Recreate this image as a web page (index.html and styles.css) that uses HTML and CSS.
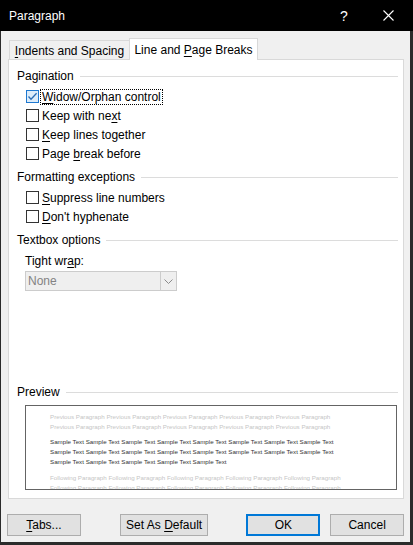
FILE: index.html
```html
<!DOCTYPE html>
<html>
<head>
<meta charset="utf-8">
<title>Paragraph</title>
<link rel="stylesheet" href="styles.css">
</head>
<body>
<div class="dialog">
  <div class="titlebar">
    <span class="title">Paragraph</span>
    <span class="help">?</span>
    <svg class="close" width="11" height="11" viewBox="0 0 11 11"><path d="M0.5 0.5L10.5 10.5M10.5 0.5L0.5 10.5" stroke="#fff" stroke-width="1.1" fill="none"/></svg>
  </div>
  <div class="client">
    <div class="tabs">
      <div class="tab"><span><u>I</u>ndents and Spacing</span></div>
      <div class="tab active"><span>Line and <u>P</u>age Breaks</span></div>
    </div>
    <div class="panel">
      <div class="group-title"><span>Pagination</span></div>
      <div class="checks">
        <div class="check"><span class="box checked"><svg width="11" height="11" viewBox="0 0 11 11"><path d="M1.5 5.5L4 8.2L9.6 2.2" stroke="#2a6db5" stroke-width="1.3" fill="none"/></svg></span><span class="label focus"><u>W</u>idow/Orphan control</span></div>
        <div class="check"><span class="box"></span><span class="label">Keep with ne<u>x</u>t</span></div>
        <div class="check"><span class="box"></span><span class="label"><u>K</u>eep lines together</span></div>
        <div class="check"><span class="box"></span><span class="label">Page <u>b</u>reak before</span></div>
      </div>
      <div class="group-title sec"><span>Formatting exceptions</span></div>
      <div class="checks">
        <div class="check"><span class="box"></span><span class="label"><u>S</u>uppress line numbers</span></div>
        <div class="check"><span class="box"></span><span class="label"><u>D</u>on't hyphenate</span></div>
      </div>
      <div class="group-title sec"><span>Textbox options</span></div>
      <div class="field-label">Tight wr<u>a</u>p:</div>
      <div class="select">
        <span class="select-value">None</span>
        <span class="select-btn"><svg width="9" height="5" viewBox="0 0 9 5"><path d="M0.5 0.5L4.5 4.5L8.5 0.5" stroke="#8a8a8a" stroke-width="1" fill="none"/></svg></span>
      </div>
      <div class="group-title preview-title"><span>Preview</span></div>
      <div class="preview">
        <div class="pv-block pv-prev">
          <div class="pv-line">Previous Paragraph Previous Paragraph Previous Paragraph Previous Paragraph Previous Paragraph</div>
          <div class="pv-line">Previous Paragraph Previous Paragraph Previous Paragraph Previous Paragraph Previous Paragraph</div>
        </div>
        <div class="pv-block pv-sample">
          <div class="pv-line">Sample Text Sample Text Sample Text Sample Text Sample Text Sample Text Sample Text Sample Text</div>
          <div class="pv-line">Sample Text Sample Text Sample Text Sample Text Sample Text Sample Text Sample Text Sample Text</div>
          <div class="pv-line">Sample Text Sample Text Sample Text Sample Text Sample Text</div>
        </div>
        <div class="pv-block pv-prev">
          <div class="pv-line">Following Paragraph Following Paragraph Following Paragraph Following Paragraph Following Paragraph</div>
          <div class="pv-line">Following Paragraph Following Paragraph Following Paragraph Following Paragraph Following Paragraph</div>
        </div>
      </div>
    </div>
    <div class="buttons">
      <div class="btn"><span><u>T</u>abs...</span></div>
      <div class="btn set-default"><span>Set As <u>D</u>efault</span></div>
      <div class="btn ok"><span>OK</span></div>
      <div class="btn cancel"><span>Cancel</span></div>
    </div>
  </div>
</div>
</body>
</html>
```

FILE: styles.css
```css
* { box-sizing: border-box; }
html, body { margin: 0; padding: 0; }
body {
  width: 413px;
  height: 545px;
  background: #2b2b2b;
  font-family: "Liberation Sans", Arial, sans-serif;
  font-size: 12px;
  color: #000;
  overflow: hidden;
}
u { text-decoration-thickness: 1px; text-underline-offset: 2px; }

.dialog { display: flex; flex-direction: column; height: 545px; }

.titlebar {
  flex: none;
  height: 31px;
  background: #000;
  color: #fff;
  display: flex;
  align-items: center;
}
.title { margin-left: 9px; font-size: 12px; }
.help { margin-left: auto; margin-right: 37px; font-size: 14px; width: 6px; text-align: center; }
.close { margin-right: 19px; }

.client {
  flex: 1;
  margin: 0 3px 3px 1px;
  background: #f0f0f0;
  padding: 7px 6px 0 7px;
  display: flex;
  flex-direction: column;
}

.tabs { display: flex; align-items: flex-end; height: 21px; padding-left: 1px; }
.tab {
  height: 19px;
  width: 120px;
  border: 1px solid #d9d9d9;
  border-bottom: none;
  border-right: none;
  background: #f0f0f0;
  display: flex;
  align-items: center;
  justify-content: center;
  padding-top: 2px;
}
.tab.active {
  height: 22px;
  width: 129px;
  border-right: 1px solid #d9d9d9;
  background: #fff;
  margin-bottom: -1px;
  position: relative;
  z-index: 1;
  padding-top: 0;
}

.panel {
  flex: none;
  height: 440px;
  background: #fff;
  border: 1px solid #d9d9d9;
  padding: 0 5px 0 0;
  display: flex;
  flex-direction: column;
}

.group-title {
  display: flex;
  align-items: center;
  height: 16px;
  padding-left: 8px;
  margin-top: 8px;
}
.group-title::after {
  content: "";
  flex: 1;
  height: 1px;
  background: #dcdcdc;
  margin-left: 6px;
}
.group-title.sec { margin-top: 6px; }
.group-title.preview-title { margin-top: 93px; }

.checks { margin-top: 3px; display: flex; flex-direction: column; }
.check { display: flex; align-items: center; height: 19px; padding-left: 17px; }
.box {
  width: 13px;
  height: 13px;
  border: 1px solid #333;
  background: #fff;
  flex: none;
  display: flex;
}
.box.checked { border-color: #1e78d0; background: #dcecfa; }
.label {
  margin-left: 1px;
  border: 1px solid transparent;
  padding: 0 1px;
  line-height: 14px;
}
.label.focus { border: 1px dotted #000; }

.field-label { padding-left: 16px; margin-top: 5px; height: 16px; line-height: 16px; }

.select {
  margin-top: 2px;
  margin-left: 16px;
  width: 152px;
  height: 20px;
  border: 1px solid #cccccc;
  background: #efefef;
  display: flex;
  align-items: stretch;
}
.select-value { flex: 1; padding-left: 2px; color: #838383; line-height: 18px; }
.select-btn {
  width: 16px;
  border-left: 1px solid #cccccc;
  display: flex;
  align-items: center;
  justify-content: center;
}

.preview {
  margin-top: 5px;
  margin-left: 16px;
  width: 372px;
  height: 85px;
  border: 1px solid #646464;
  background: #fff;
  overflow: hidden;
  padding: 6px 0 0 24px;
  font-size: 6.2px;
  line-height: 10px;
}
.pv-line { white-space: nowrap; }
.pv-prev { color: #c6c6c6; }
.pv-sample { color: #333; margin: 5px 0 6px; }

.buttons { display: flex; margin-top: 15px; height: 22px; margin-left: -1px; }
.btn {
  height: 22px;
  width: 74px;
  background: #e1e1e1;
  border: 1px solid #adadad;
  display: flex;
  align-items: center;
  justify-content: center;
}
.btn.set-default { width: 89px; margin-left: 39px; }
.btn.ok { border: 2px solid #0078d7; margin-left: 38px; }
.btn.cancel { margin-left: 10px; }
```
